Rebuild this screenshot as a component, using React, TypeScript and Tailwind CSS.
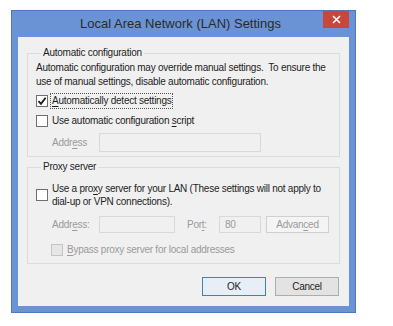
import type { ReactNode } from 'react'

const font = { fontFamily: '"Liberation Sans", Arial, sans-serif' }

function U({ children }: { children: ReactNode }) {
  return <span className="underline underline-offset-2">{children}</span>
}

function Box({ checked = false, disabled = false }: { checked?: boolean; disabled?: boolean }) {
  return (
    <span
      className={
        disabled
          ? 'flex h-[12px] w-[12px] shrink-0 items-center justify-center border border-[#c4c4c4] bg-[#e6e6e6]'
          : 'flex h-[12px] w-[12px] shrink-0 items-center justify-center border border-[#6f6f6f] bg-white'
      }
    >
      {checked && (
        <svg width="10" height="10" viewBox="0 0 10 10">
          <path d="M1.5 5.2 L4 7.8 L8.6 1.8" fill="none" stroke="#1b1b1b" strokeWidth="1.8" />
        </svg>
      )}
    </span>
  )
}

function Field({ className }: { className: string }) {
  return <div className={`border border-[#d9d9d9] bg-[#f0f0f0] ${className}`} />
}

export default function App() {
  return (
    <div className="h-[326px] w-[393px] overflow-hidden bg-white pl-[11px] pt-[10px]" style={font}>
      <div className="flex h-[303px] w-[345px] flex-col border border-[#4e78bd] bg-[#6a93d5]">
        {/* title bar */}
        <div className="flex h-[26px] items-start">
          <div className="flex-1 pl-[26px] pt-[5px] text-center text-[13px] leading-[16px] text-[#2a2a2a]">
            Local Area Network (LAN) Settings
          </div>
          <div className="mr-[6px] flex h-[17px] w-[26px] items-center justify-center bg-[#c9463d]">
            <svg width="9" height="9" viewBox="0 0 9 9">
              <path d="M1 1 L8 8 M8 1 L1 8" stroke="#fff" strokeWidth="1.6" />
            </svg>
          </div>
        </div>

        {/* client area */}
        <div className="mx-[6px] mb-[6px] flex-1 whitespace-nowrap bg-[#f0f0f0] px-[9px] text-[10px] leading-[14px] tracking-[-0.25px] text-[#1e1e1e]">
          <fieldset className="mt-[9px] h-[111px] border border-[#dcdcdc] pl-[8px]">
            <legend className="ml-[5px] px-[2px]">Automatic configuration</legend>
            <p className="mt-[1px]">
              Automatic configuration may override manual settings.&nbsp; To ensure the
              <br />
              use of manual settings, disable automatic configuration.
            </p>
            <div className="mt-[4px] flex items-center gap-[2px]">
              <Box checked />
              <span className="border border-dotted border-[#555] px-[1px]">
                <U>A</U>utomatically detect settings
              </span>
            </div>
            <div className="mt-[5px] flex items-center gap-[4px]">
              <Box />
              <span>
                Use automatic configuration <U>s</U>cript
              </span>
            </div>
            <div className="mt-[5px] flex items-center">
              <span className="w-[63px] pl-[16px] text-[#9a9a9a]">
                Addr<U>e</U>ss
              </span>
              <Field className="h-[19px] w-[162px]" />
            </div>
          </fieldset>

          <fieldset className="mt-[3px] h-[104px] border border-[#dcdcdc] pl-[8px]">
            <legend className="ml-[5px] px-[2px]">Proxy server</legend>
            <div className="mt-[8px] flex items-start gap-[4px]">
              <span className="mt-[7px]">
                <Box />
              </span>
              <span className="leading-[13px]">
                Use a pro<U>x</U>y server for your LAN (These settings will not apply to
                <br />
                dial-up or VPN connections).
              </span>
            </div>
            <div className="mt-[8px] flex items-center text-[#9a9a9a]">
              <span className="w-[63px] pl-[16px]">
                Addr<U>e</U>ss:
              </span>
              <Field className="h-[17px] w-[76px]" />
              <span className="ml-[12px] w-[32px]">
                Por<U>t</U>:
              </span>
              <div className="flex h-[17px] w-[42px] items-center border border-[#d9d9d9] bg-[#f0f0f0] pl-[5px]">
                80
              </div>
              <div className="ml-[5px] flex h-[17px] w-[63px] items-center justify-center border border-[#d0d0d0] bg-[#f4f4f4]">
                Advan<U>c</U>ed
              </div>
            </div>
            <div className="mt-[10px] flex items-center gap-[4px] pl-[15px] text-[#9a9a9a]">
              <Box disabled />
              <span>
                <U>B</U>ypass proxy server for local addresses
              </span>
            </div>
          </fieldset>

          <div className="mt-[13px] flex justify-end gap-[9px] pr-[1px]">
            <div className="flex h-[19px] w-[64px] items-center justify-center border border-[#3c83c4] bg-[#e7eef5]">
              OK
            </div>
            <div className="flex h-[19px] w-[64px] items-center justify-center border border-[#adadad] bg-[#e3e3e3]">
              Cancel
            </div>
          </div>
        </div>
      </div>
    </div>
  )
}
